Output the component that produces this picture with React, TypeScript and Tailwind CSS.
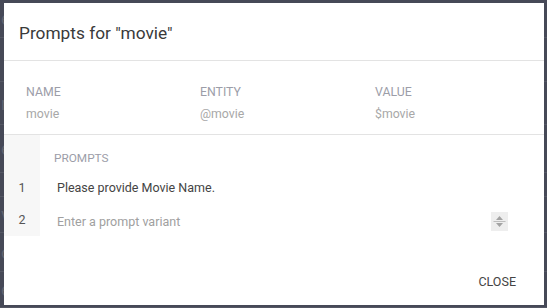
import React from 'react';

const bgRows = [
  { h: 38, t: 'e' },
  { h: 44, t: '' },
  { h: 43, t: 'r' },
  { h: 48, t: 'e' },
  { h: 24, t: '' },
  { h: 36, t: 'v' },
  { h: 39, t: 'o' },
  { h: 36, t: 'e' },
];

const PromptsDialog = () => {
  return (
    <div className="absolute left-[4px] top-[3px] w-[540px] h-[302px] bg-white flex flex-col">
      <div className="h-[58px] border-b border-[#e3e3e3] flex items-center px-[15px] pt-[4px]">
        <h2 className="text-[17.3px] text-[#3a3a3a]">Prompts for "movie"</h2>
      </div>

      <div className="h-[74px] border-b border-[#e3e3e3] pl-[22px] pt-[23px] flex">
        <div className="w-[174px]">
          <div className="text-[12.3px] leading-[16px] text-[#9c9da8]">NAME</div>
          <div className="text-[12.3px] leading-[16px] text-[#a8a8a8] mt-[6px]">movie</div>
        </div>
        <div className="w-[175px]">
          <div className="text-[12.3px] leading-[16px] text-[#9c9da8]">ENTITY</div>
          <div className="text-[12.3px] leading-[16px] text-[#a8a8a8] mt-[6px]">@movie</div>
        </div>
        <div className="w-[150px]">
          <div className="text-[12.3px] leading-[16px] text-[#9c9da8]">VALUE</div>
          <div className="text-[12.3px] leading-[16px] text-[#a8a8a8] mt-[6px]">$movie</div>
        </div>
      </div>

      <div className="flex">
        <div className="w-[36px] h-[101px] bg-[#f7f7f7] flex flex-col items-center pt-[45px]">
          <span className="text-[12.5px] leading-[16px] text-[#555] h-[32px]">1</span>
          <span className="text-[12.5px] leading-[16px] text-[#555]">2</span>
        </div>
        <div className="flex-1 pl-[14px] pr-[36px] pt-[15px]">
          <div className="text-[11.8px] leading-[16px] text-[#9c9da8]">PROMPTS</div>
          <div className="pl-[3px] mt-[14px] text-[12.5px] leading-[16px] text-[#444]">
            Please provide Movie Name.
          </div>
          <div className="pl-[3px] mt-[16px] flex items-center justify-between">
            <span className="text-[12.5px] leading-[16px] text-[#a0a0a0]">Enter a prompt variant</span>
            <span className="w-[17px] h-[19px] bg-[#eeeeee] flex items-center justify-center">
              <svg width="13" height="13" viewBox="0 0 13 13">
                <path d="M6.5 1 L10 5 H3 Z" fill="#a3a3a3" />
                <rect x="0.5" y="6" width="12" height="1" fill="#bdbdbd" />
                <path d="M3 8 H10 L6.5 12 Z" fill="#a3a3a3" />
              </svg>
            </span>
          </div>
        </div>
      </div>

      <div className="flex-1 flex items-end justify-end pb-[15px] pr-[28px]">
        <button className="text-[12.5px] leading-[16px] text-[#444]">CLOSE</button>
      </div>
    </div>
  );
};

export default function App() {
  return (
    <div
      className="relative w-[547px] h-[308px] bg-[#464957] overflow-hidden"
      style={{ fontFamily: 'Roboto, "Liberation Sans", sans-serif' }}
    >
      <div className="flex flex-col">
        {bgRows.map((r, i) => (
          <div
            key={i}
            className="border-b border-[#545764] flex items-center text-[18px] text-[#60636f] pl-[1px]"
            style={{ height: r.h }}
          >
            {r.t}
          </div>
        ))}
      </div>
      <PromptsDialog />
    </div>
  );
}
